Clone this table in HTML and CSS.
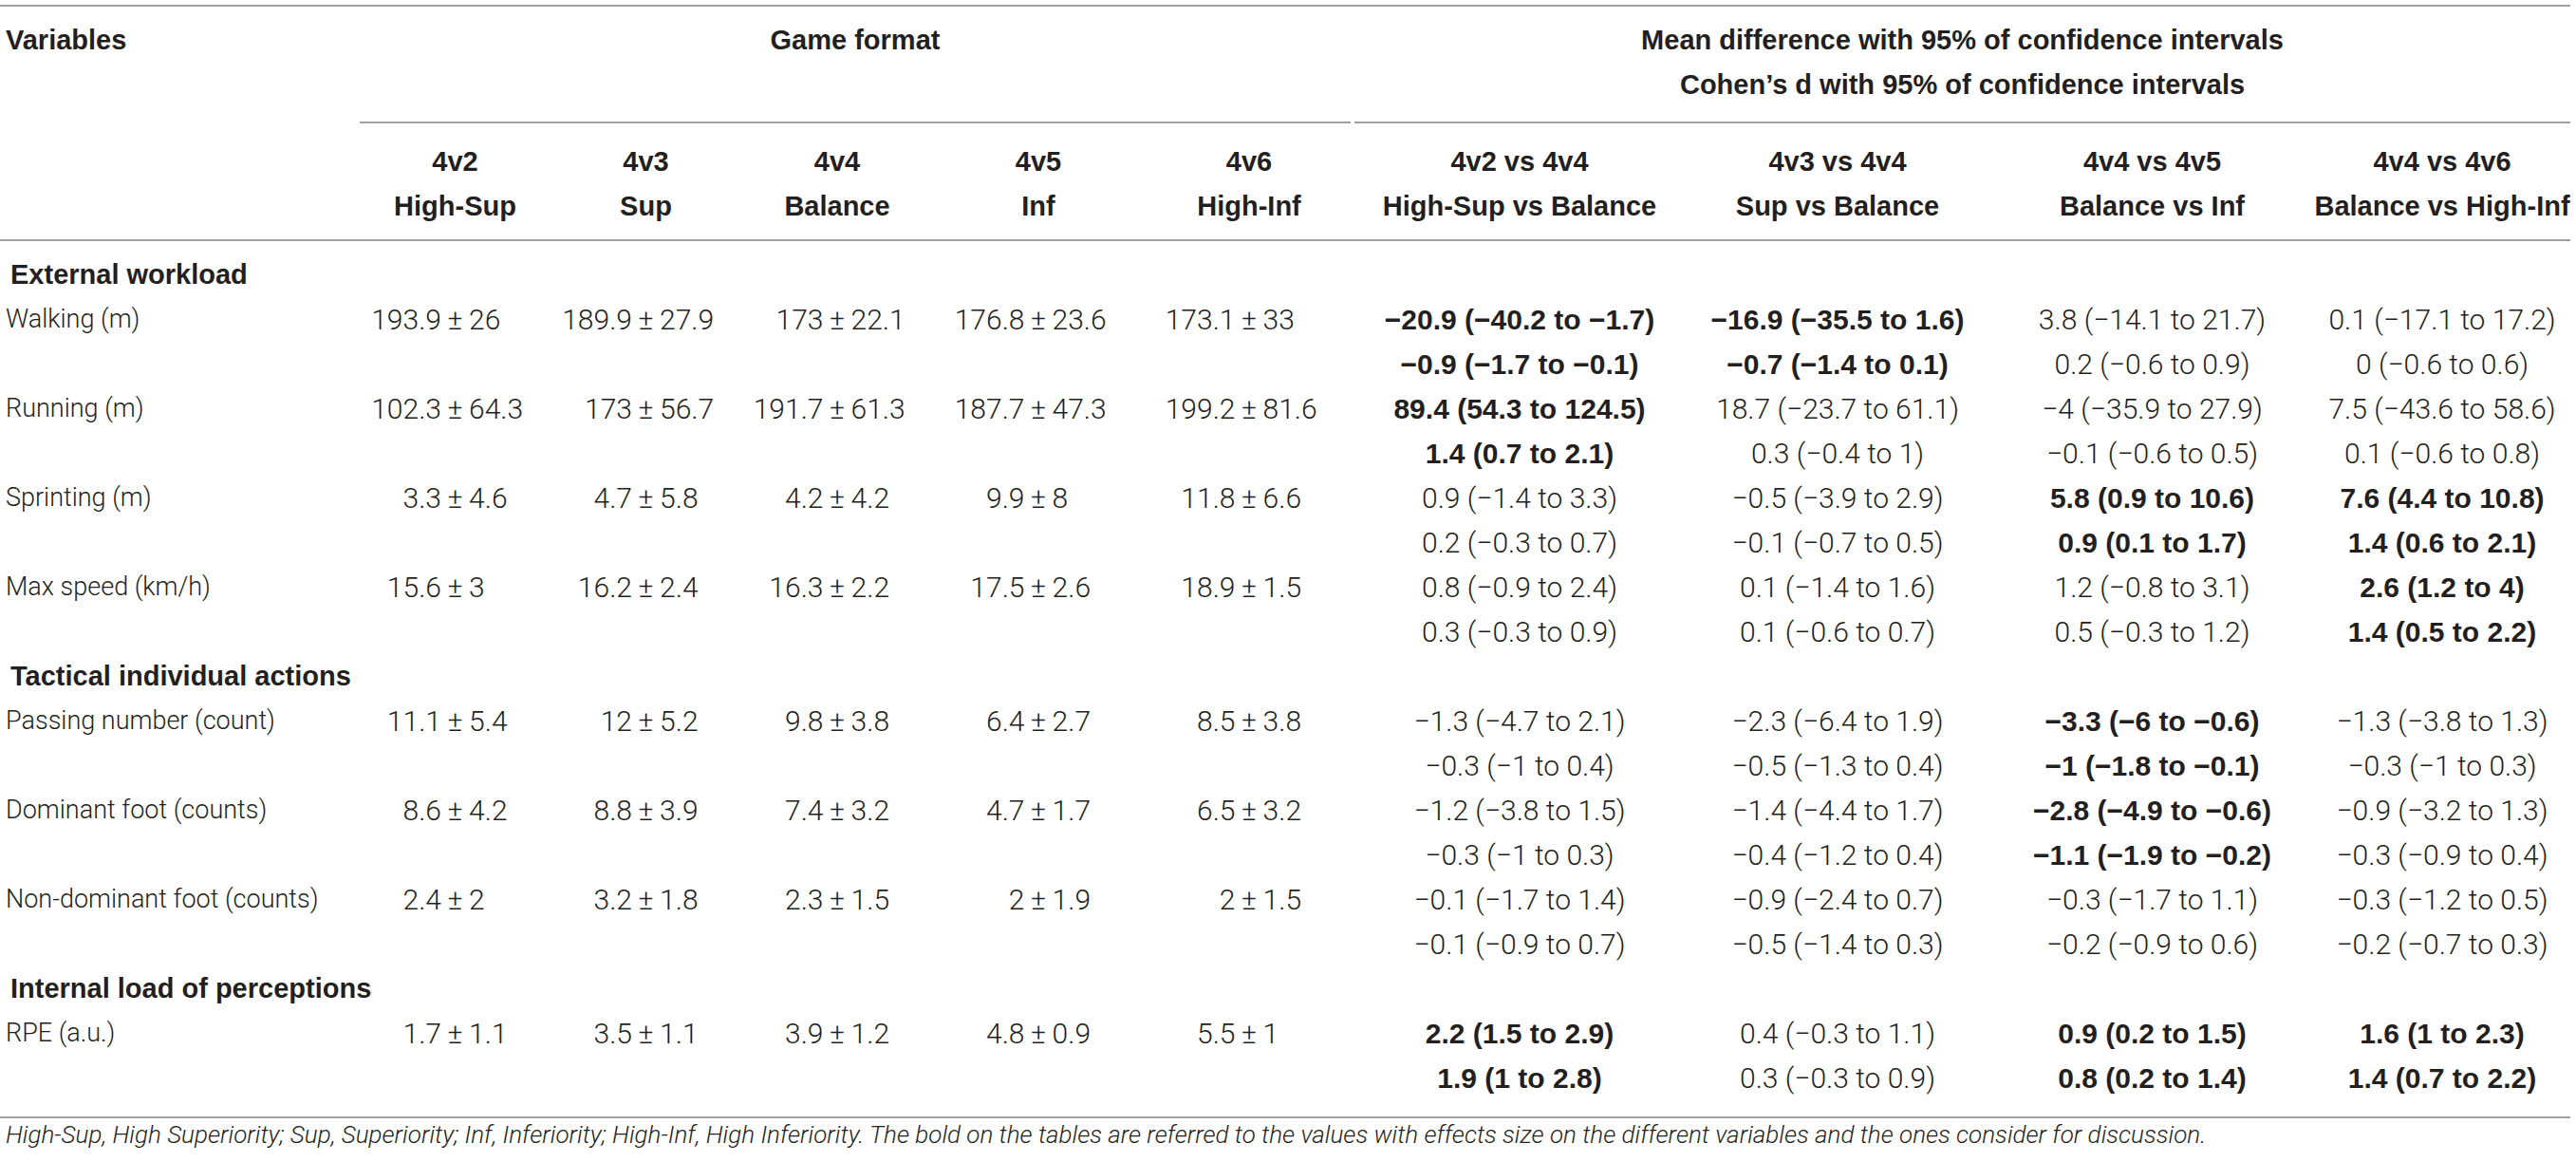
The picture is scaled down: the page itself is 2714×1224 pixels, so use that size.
FILE: index.html
```html
<!DOCTYPE html>
<html lang="en">
<head>
<meta charset="utf-8">
<title>Game format table</title>
<link rel="stylesheet" href="styles.css">
</head>
<body>
<table class="t">
  <colgroup>
    <col class="w-var">
    <col class="w-g1"><col class="w-g2"><col class="w-g3"><col class="w-g4"><col class="w-g5">
    <col class="w-c1"><col class="w-c2"><col class="w-c3"><col class="w-c4">
  </colgroup>
  <thead>
    <tr class="h1">
      <th class="var">Variables</th>
      <th class="grp grp-game" colspan="5"><div class="in">Game format</div></th>
      <th class="grp grp-diff" colspan="4"><div class="in">Mean difference with 95% of confidence intervals<br>Cohen’s d with 95% of confidence intervals</div></th>
    </tr>
    <tr class="h2">
      <th></th>
      <th>4v2<br>High-Sup</th>
      <th>4v3<br>Sup</th>
      <th>4v4<br>Balance</th>
      <th>4v5<br>Inf</th>
      <th>4v6<br>High-Inf</th>
      <th>4v2 vs 4v4<br>High-Sup vs Balance</th>
      <th>4v3 vs 4v4<br>Sup vs Balance</th>
      <th>4v4 vs 4v5<br>Balance vs Inf</th>
      <th>4v4 vs 4v6<br>Balance vs High-Inf</th>
    </tr>
  </thead>
  <tbody>
    <tr class="first"><td class="sec" colspan="10">External workload</td></tr>

    <tr>
      <td class="lab">Walking (m)</td>
      <td><div class="pmv"><span class="l">193.9</span><span class="pm">±</span><span class="r">26</span></div></td>
      <td><div class="pmv"><span class="l">189.9</span><span class="pm">±</span><span class="r">27.9</span></div></td>
      <td><div class="pmv"><span class="l">173</span><span class="pm">±</span><span class="r">22.1</span></div></td>
      <td><div class="pmv"><span class="l">176.8</span><span class="pm">±</span><span class="r">23.6</span></div></td>
      <td><div class="pmv"><span class="l">173.1</span><span class="pm">±</span><span class="r">33</span></div></td>
      <td class="b">−20.9 (−40.2 to −1.7)</td>
      <td class="b">−16.9 (−35.5 to 1.6)</td>
      <td>3.8 (−14.1 to 21.7)</td>
      <td>0.1 (−17.1 to 17.2)</td>
    </tr>
    <tr>
      <td></td><td></td><td></td><td></td><td></td><td></td>
      <td class="b">−0.9 (−1.7 to −0.1)</td>
      <td class="b">−0.7 (−1.4 to 0.1)</td>
      <td>0.2 (−0.6 to 0.9)</td>
      <td>0 (−0.6 to 0.6)</td>
    </tr>

    <tr>
      <td class="lab">Running (m)</td>
      <td><div class="pmv"><span class="l">102.3</span><span class="pm">±</span><span class="r">64.3</span></div></td>
      <td><div class="pmv"><span class="l">173</span><span class="pm">±</span><span class="r">56.7</span></div></td>
      <td><div class="pmv"><span class="l">191.7</span><span class="pm">±</span><span class="r">61.3</span></div></td>
      <td><div class="pmv"><span class="l">187.7</span><span class="pm">±</span><span class="r">47.3</span></div></td>
      <td><div class="pmv"><span class="l">199.2</span><span class="pm">±</span><span class="r">81.6</span></div></td>
      <td class="b">89.4 (54.3 to 124.5)</td>
      <td>18.7 (−23.7 to 61.1)</td>
      <td>−4 (−35.9 to 27.9)</td>
      <td>7.5 (−43.6 to 58.6)</td>
    </tr>
    <tr>
      <td></td><td></td><td></td><td></td><td></td><td></td>
      <td class="b">1.4 (0.7 to 2.1)</td>
      <td>0.3 (−0.4 to 1)</td>
      <td>−0.1 (−0.6 to 0.5)</td>
      <td>0.1 (−0.6 to 0.8)</td>
    </tr>

    <tr>
      <td class="lab">Sprinting (m)</td>
      <td><div class="pmv"><span class="l">3.3</span><span class="pm">±</span><span class="r">4.6</span></div></td>
      <td><div class="pmv"><span class="l">4.7</span><span class="pm">±</span><span class="r">5.8</span></div></td>
      <td><div class="pmv"><span class="l">4.2</span><span class="pm">±</span><span class="r">4.2</span></div></td>
      <td><div class="pmv"><span class="l">9.9</span><span class="pm">±</span><span class="r">8</span></div></td>
      <td><div class="pmv"><span class="l">11.8</span><span class="pm">±</span><span class="r">6.6</span></div></td>
      <td>0.9 (−1.4 to 3.3)</td>
      <td>−0.5 (−3.9 to 2.9)</td>
      <td class="b">5.8 (0.9 to 10.6)</td>
      <td class="b">7.6 (4.4 to 10.8)</td>
    </tr>
    <tr>
      <td></td><td></td><td></td><td></td><td></td><td></td>
      <td>0.2 (−0.3 to 0.7)</td>
      <td>−0.1 (−0.7 to 0.5)</td>
      <td class="b">0.9 (0.1 to 1.7)</td>
      <td class="b">1.4 (0.6 to 2.1)</td>
    </tr>

    <tr>
      <td class="lab">Max speed (km/h)</td>
      <td><div class="pmv"><span class="l">15.6</span><span class="pm">±</span><span class="r">3</span></div></td>
      <td><div class="pmv"><span class="l">16.2</span><span class="pm">±</span><span class="r">2.4</span></div></td>
      <td><div class="pmv"><span class="l">16.3</span><span class="pm">±</span><span class="r">2.2</span></div></td>
      <td><div class="pmv"><span class="l">17.5</span><span class="pm">±</span><span class="r">2.6</span></div></td>
      <td><div class="pmv"><span class="l">18.9</span><span class="pm">±</span><span class="r">1.5</span></div></td>
      <td>0.8 (−0.9 to 2.4)</td>
      <td>0.1 (−1.4 to 1.6)</td>
      <td>1.2 (−0.8 to 3.1)</td>
      <td class="b">2.6 (1.2 to 4)</td>
    </tr>
    <tr>
      <td></td><td></td><td></td><td></td><td></td><td></td>
      <td>0.3 (−0.3 to 0.9)</td>
      <td>0.1 (−0.6 to 0.7)</td>
      <td>0.5 (−0.3 to 1.2)</td>
      <td class="b">1.4 (0.5 to 2.2)</td>
    </tr>

    <tr><td class="sec" colspan="10">Tactical individual actions</td></tr>

    <tr>
      <td class="lab">Passing number (count)</td>
      <td><div class="pmv"><span class="l">11.1</span><span class="pm">±</span><span class="r">5.4</span></div></td>
      <td><div class="pmv"><span class="l">12</span><span class="pm">±</span><span class="r">5.2</span></div></td>
      <td><div class="pmv"><span class="l">9.8</span><span class="pm">±</span><span class="r">3.8</span></div></td>
      <td><div class="pmv"><span class="l">6.4</span><span class="pm">±</span><span class="r">2.7</span></div></td>
      <td><div class="pmv"><span class="l">8.5</span><span class="pm">±</span><span class="r">3.8</span></div></td>
      <td>−1.3 (−4.7 to 2.1)</td>
      <td>−2.3 (−6.4 to 1.9)</td>
      <td class="b">−3.3 (−6 to −0.6)</td>
      <td>−1.3 (−3.8 to 1.3)</td>
    </tr>
    <tr>
      <td></td><td></td><td></td><td></td><td></td><td></td>
      <td>−0.3 (−1 to 0.4)</td>
      <td>−0.5 (−1.3 to 0.4)</td>
      <td class="b">−1 (−1.8 to −0.1)</td>
      <td>−0.3 (−1 to 0.3)</td>
    </tr>

    <tr>
      <td class="lab">Dominant foot (counts)</td>
      <td><div class="pmv"><span class="l">8.6</span><span class="pm">±</span><span class="r">4.2</span></div></td>
      <td><div class="pmv"><span class="l">8.8</span><span class="pm">±</span><span class="r">3.9</span></div></td>
      <td><div class="pmv"><span class="l">7.4</span><span class="pm">±</span><span class="r">3.2</span></div></td>
      <td><div class="pmv"><span class="l">4.7</span><span class="pm">±</span><span class="r">1.7</span></div></td>
      <td><div class="pmv"><span class="l">6.5</span><span class="pm">±</span><span class="r">3.2</span></div></td>
      <td>−1.2 (−3.8 to 1.5)</td>
      <td>−1.4 (−4.4 to 1.7)</td>
      <td class="b">−2.8 (−4.9 to −0.6)</td>
      <td>−0.9 (−3.2 to 1.3)</td>
    </tr>
    <tr>
      <td></td><td></td><td></td><td></td><td></td><td></td>
      <td>−0.3 (−1 to 0.3)</td>
      <td>−0.4 (−1.2 to 0.4)</td>
      <td class="b">−1.1 (−1.9 to −0.2)</td>
      <td>−0.3 (−0.9 to 0.4)</td>
    </tr>

    <tr>
      <td class="lab">Non-dominant foot (counts)</td>
      <td><div class="pmv"><span class="l">2.4</span><span class="pm">±</span><span class="r">2</span></div></td>
      <td><div class="pmv"><span class="l">3.2</span><span class="pm">±</span><span class="r">1.8</span></div></td>
      <td><div class="pmv"><span class="l">2.3</span><span class="pm">±</span><span class="r">1.5</span></div></td>
      <td><div class="pmv"><span class="l">2</span><span class="pm">±</span><span class="r">1.9</span></div></td>
      <td><div class="pmv"><span class="l">2</span><span class="pm">±</span><span class="r">1.5</span></div></td>
      <td>−0.1 (−1.7 to 1.4)</td>
      <td>−0.9 (−2.4 to 0.7)</td>
      <td>−0.3 (−1.7 to 1.1)</td>
      <td>−0.3 (−1.2 to 0.5)</td>
    </tr>
    <tr>
      <td></td><td></td><td></td><td></td><td></td><td></td>
      <td>−0.1 (−0.9 to 0.7)</td>
      <td>−0.5 (−1.4 to 0.3)</td>
      <td>−0.2 (−0.9 to 0.6)</td>
      <td>−0.2 (−0.7 to 0.3)</td>
    </tr>

    <tr><td class="sec" colspan="10">Internal load of perceptions</td></tr>

    <tr>
      <td class="lab">RPE (a.u.)</td>
      <td><div class="pmv"><span class="l">1.7</span><span class="pm">±</span><span class="r">1.1</span></div></td>
      <td><div class="pmv"><span class="l">3.5</span><span class="pm">±</span><span class="r">1.1</span></div></td>
      <td><div class="pmv"><span class="l">3.9</span><span class="pm">±</span><span class="r">1.2</span></div></td>
      <td><div class="pmv"><span class="l">4.8</span><span class="pm">±</span><span class="r">0.9</span></div></td>
      <td><div class="pmv"><span class="l">5.5</span><span class="pm">±</span><span class="r">1</span></div></td>
      <td class="b">2.2 (1.5 to 2.9)</td>
      <td>0.4 (−0.3 to 1.1)</td>
      <td class="b">0.9 (0.2 to 1.5)</td>
      <td class="b">1.6 (1 to 2.3)</td>
    </tr>
    <tr class="last">
      <td></td><td></td><td></td><td></td><td></td><td></td>
      <td class="b">1.9 (1 to 2.8)</td>
      <td>0.3 (−0.3 to 0.9)</td>
      <td class="b">0.8 (0.2 to 1.4)</td>
      <td class="b">1.4 (0.7 to 2.2)</td>
    </tr>
  </tbody>
</table>
<p class="note">High-Sup, High Superiority; Sup, Superiority; Inf, Inferiority; High-Inf, High Inferiority. The bold on the tables are referred to the values with effects size on the different variables and the ones consider for discussion.</p>
</body>
</html>
```

FILE: styles.css
```css
html, body {
  margin: 0;
  background: #ffffff;
}

body {
  padding: 5px 0 0 0;
  color: #231f20;
  font-family: "Liberation Sans", Arial, sans-serif;
}

.t {
  width: 2708px;
  table-layout: fixed;
  border-collapse: collapse;
  border-top: 2px solid #a0a0a0;
}

.w-var { width: 379px; }
.w-g1 { width: 201px; }
.w-g2 { width: 201px; }
.w-g3 { width: 202px; }
.w-g4 { width: 222px; }
.w-g5 { width: 222px; }
.w-c1 { width: 348px; }
.w-c2 { width: 322px; }
.w-c3 { width: 341px; }
.w-c4 { width: 270px; }

th {
  font-family: "Liberation Sans", Arial, sans-serif;
  font-weight: 700;
  font-size: 29px;
  line-height: 47px;
  padding: 0;
  text-align: center;
  white-space: nowrap;
  color: #231f20;
}

.h1 th {
  vertical-align: top;
  padding-top: 12px;
  padding-bottom: 0;
}

.h1 .var {
  text-align: left;
  padding-left: 6px;
}

.grp .in {
  border-bottom: 2px solid #a0a0a0;
  padding-bottom: 15px;
  text-align: center;
}

.grp-game .in {
  margin-right: 4px;
  height: 94px;
}

.h2 th {
  padding-top: 17px;
  padding-bottom: 11px;
  border-bottom: 2px solid #a0a0a0;
}

td {
  font-family: Roboto, "Liberation Sans", Arial, sans-serif;
  font-weight: 300;
  font-size: 30px;
  line-height: 47px;
  height: 47px;
  padding: 0;
  text-align: center;
  white-space: nowrap;
  vertical-align: top;
  color: #231f20;
}

td.b {
  font-family: "Liberation Sans", Arial, sans-serif;
  font-weight: 700;
}

td.lab {
  text-align: left;
  padding-left: 6px;
  font-size: 27px;
}

td.sec {
  text-align: left;
  padding-left: 11px;
  font-family: "Liberation Sans", Arial, sans-serif;
  font-weight: 700;
  font-size: 29px;
}

tr.first td {
  padding-top: 12px;
}

tr.last td {
  padding-bottom: 17px;
  border-bottom: 2px solid #a0a0a0;
}

.pmv {
  display: flex;
  align-items: baseline;
}

.pmv .l {
  flex: 1 1 0;
  text-align: right;
}

.pmv .pm {
  padding: 0 0.22em;
}

.pmv .r {
  flex: 1 1 0;
  text-align: left;
}

.note {
  margin: 0;
  padding-left: 6px;
  font-family: Roboto, "Liberation Sans", Arial, sans-serif;
  font-weight: 300;
  font-style: italic;
  font-size: 26px;
  line-height: 34px;
  white-space: nowrap;
  color: #231f20;
}
```
